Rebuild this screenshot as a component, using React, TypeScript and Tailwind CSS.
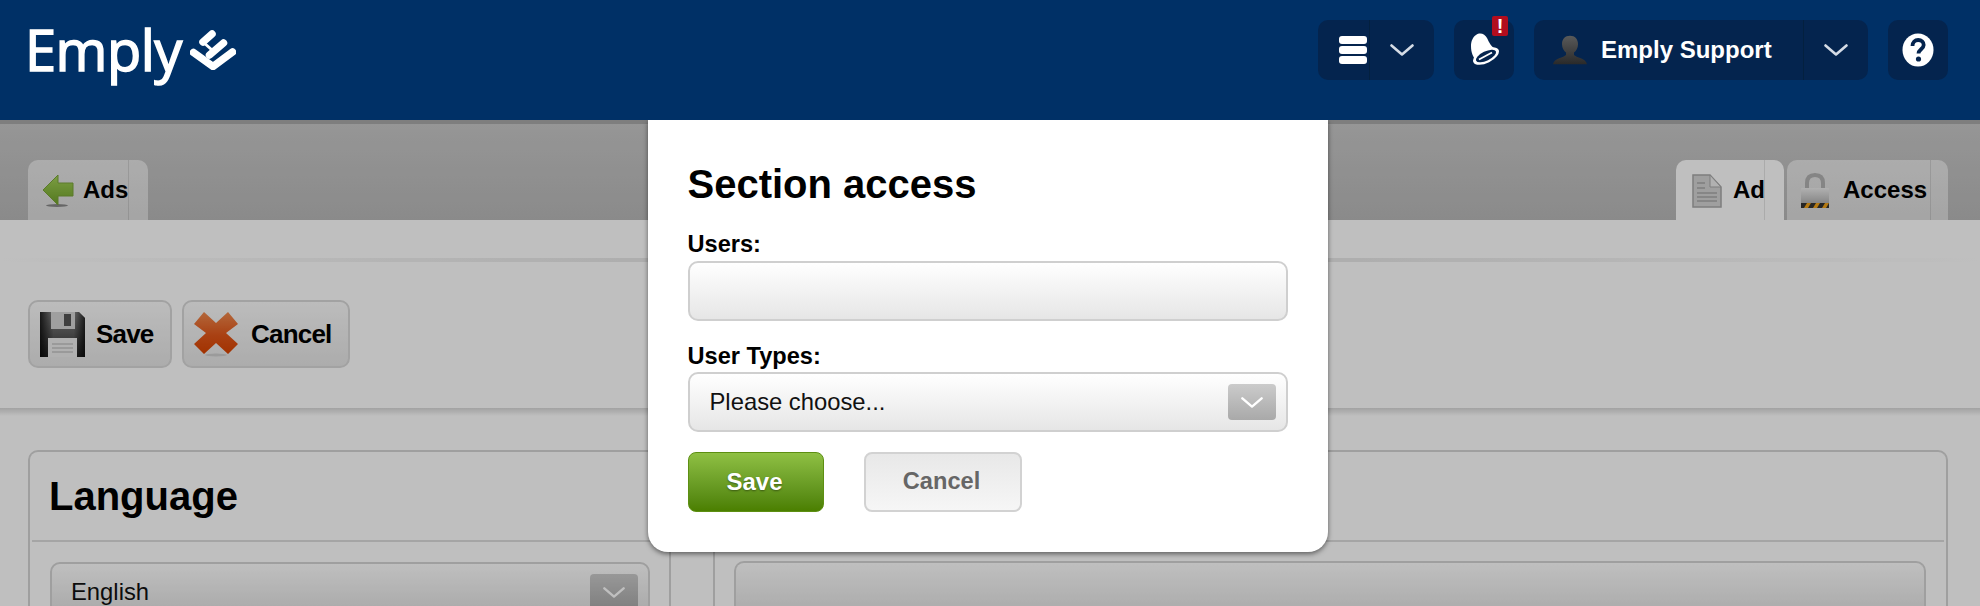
import React from "react";

const Chevron = ({ className = "" }: { className?: string }) => (
  <svg viewBox="0 0 24 12" className={className} fill="none" stroke="currentColor" strokeWidth="2.6" strokeLinecap="round" strokeLinejoin="round">
    <path d="M1.5 1.5 12 10.5 22.5 1.5" />
  </svg>
);

const Logo = () => (
  <svg viewBox="0 0 46 40" className="ml-[8px] mt-[13px] h-[40px] w-[46px]" fill="none" stroke="#fff" strokeLinecap="round" strokeLinejoin="round">
    <path d="M3.500 22.500 23 36.500 42.500 22" strokeWidth="7.500" />
    <path d="M22 4 13 12" strokeWidth="7.500" />
    <path d="M33.500 13 19.500 25" strokeWidth="7.500" />
    <path d="M13 12 22 20" strokeWidth="3" />
  </svg>
);

const Bell = () => (
  <svg viewBox="0 0 30 32" className="ml-[2px] mt-[13px] h-[32px] w-[30px]">
    <path d="M6 2c4-3 9-1 11 3 2 4 4 9 10 12L7 29C3 24 1 20 1 13 1 8 3 4 6 2Z" fill="#fff" />
    <ellipse cx="16" cy="23" rx="14" ry="7" transform="rotate(-26 16 23)" fill="#fff" />
    <ellipse cx="16" cy="23" rx="11" ry="4.600" transform="rotate(-26 16 23)" fill="#04244e" />
    <path d="M9 26.500 22 19.500" stroke="#fff" strokeWidth="1.800" />
  </svg>
);

const Person = () => (
  <svg viewBox="0 0 34 36" preserveAspectRatio="none" className="h-[30px] w-[34px]">
    <defs>
      <linearGradient id="pg" x1="0" y1="0" x2="0" y2="1">
        <stop offset="0" stopColor="#5a5a5a" />
        <stop offset="1" stopColor="#2a2a2a" />
      </linearGradient>
    </defs>
    <path d="M17 1c5 0 8 4 8 10 0 5-2 8-4 10v3c2 3 12 4 13 11H0c1-7 11-8 13-11v-3c-2-2-4-5-4-10C9 5 12 1 17 1Z" fill="url(#pg)" />
  </svg>
);

const Help = () => (
  <svg viewBox="0 0 32 34" className="h-[34px] w-[32px]">
    <ellipse cx="16" cy="17" rx="15.500" ry="16.500" fill="#fff" />
    <path d="M10.500 13c0-3.800 2.500-6 5.700-6 3.300 0 5.500 2.200 5.500 5 0 4-5.200 4.500-5.200 8.500" fill="none" stroke="#04244e" strokeWidth="3.800" />
    <circle cx="16.500" cy="26" r="2.600" fill="#04244e" />
  </svg>
);

const ArrowIcon = () => (
  <svg viewBox="0 0 32 34" className="h-[34px] w-[32px]">
    <defs>
      <linearGradient id="ag" x1="0" y1="0" x2="0" y2="1">
        <stop offset="0" stopColor="#a6d45a" />
        <stop offset="1" stopColor="#6fa02a" />
      </linearGradient>
    </defs>
    <ellipse cx="15" cy="31.500" rx="11" ry="1.500" fill="#888" />
    <path d="M16 1 1 16 16 31V22H31V9H16Z" fill="url(#ag)" stroke="#7aa33a" strokeWidth="1" />
  </svg>
);

const DocIcon = () => (
  <svg viewBox="0 0 30 34" className="h-[34px] w-[30px]">
    <path d="M1 1h17l11 12v20H1Z" fill="#d4d4d4" stroke="#a8a8a8" strokeWidth="1.500" />
    <path d="M18 1v12h11Z" fill="#ececec" stroke="#a8a8a8" strokeWidth="1" />
    <path d="M5 9h8M5 14h8M5 19h20M5 23h20M5 27h20" stroke="#a8a8a8" strokeWidth="1.500" />
  </svg>
);

const LockIcon = () => (
  <svg viewBox="0 0 30 36" className="h-[36px] w-[32px]">
    <defs>
      <linearGradient id="lg" x1="0" y1="0" x2="0" y2="1">
        <stop offset="0" stopColor="#ececec" />
        <stop offset="1" stopColor="#a0a0a0" />
      </linearGradient>
    </defs>
    <path d="M7 17V10C7 4 10 2 15 2s8 2 8 8v7" fill="none" stroke="#b2b2b2" strokeWidth="4" />
    <rect x="1" y="15" width="28" height="20" rx="1" fill="url(#lg)" />
    <rect x="1" y="30" width="28" height="5" fill="#333" />
    <path d="M4 35l3-5h4l-3 5ZM13 35l3-5h4l-3 5ZM22 35l3-5h4l-3 5Z" fill="#f0a218" />
  </svg>
);

const FloppyIcon = () => (
  <svg viewBox="0 0 47 46" className="h-[46px] w-[47px]">
    <defs>
      <linearGradient id="fg" x1="0" y1="0" x2="0" y2="1">
        <stop offset="0" stopColor="#8a8a8a" />
        <stop offset="1" stopColor="#2a2a2a" />
      </linearGradient>
      <linearGradient id="fh" x1="0" y1="0" x2="1" y2="0">
        <stop offset="0" stopColor="#000" stopOpacity=".75" />
        <stop offset=".3" stopColor="#000" stopOpacity="0" />
        <stop offset=".75" stopColor="#000" stopOpacity="0" />
        <stop offset="1" stopColor="#000" stopOpacity=".7" />
      </linearGradient>
    </defs>
    <path d="M1 1h39l6 6v39H1Z" fill="url(#fg)" />
    <path d="M1 1h39l6 6v39H1Z" fill="url(#fh)" />
    <rect x="12" y="1" width="24" height="17" fill="#d4d4d4" />
    <rect x="25" y="3" width="7" height="12" fill="#555" />
    <rect x="9" y="27" width="29" height="19" fill="#ececec" />
    <path d="M13 33h21M13 37h21M13 41h21" stroke="#c4c4c4" strokeWidth="1.500" />
  </svg>
);

const CrossIcon = () => (
  <svg viewBox="0 0 46 46" className="h-[46px] w-[46px]">
    <defs>
      <linearGradient id="xg" x1="0" y1="0" x2="0" y2="1">
        <stop offset="0" stopColor="#ef8a4f" />
        <stop offset=".55" stopColor="#e2571a" />
        <stop offset="1" stopColor="#d84300" />
      </linearGradient>
    </defs>
    <ellipse cx="23" cy="44" rx="11" ry="1.500" fill="#cfcfcf" />
    <path d="M11 1 23 12 35 1 45 13 33 22 45 33 35 43 23 32 11 43 1 33 13 22 1 13Z" fill="url(#xg)" />
  </svg>
);

const SelectBox = ({ text }: { text: string }) => (
  <div className="flex h-[60px] items-center justify-between rounded-[10px] border-2 border-[#cfcfcf] bg-gradient-to-b from-white to-[#e6e6e6] pl-[20px] pr-[10px]">
    <span className="text-[23.800px] text-[#111]">{text}</span>
    <span className="flex h-[36px] w-[48px] items-center justify-center rounded-[4px] bg-gradient-to-b from-[#cbcbcb] to-[#a9a9a9] text-white">
      <Chevron className="h-[11px] w-[22px]" />
    </span>
  </div>
);

const Tab = ({ icon, label, width, divider, active }: { icon: React.ReactNode; label: string; width: string; divider: string; active?: boolean }) => (
  <div className={`relative flex h-[60px] items-start rounded-t-[10px] ${width} ${active ? "bg-white" : "bg-gradient-to-b from-[#e6e6e6] to-[#dcdcdc]"}`}>
    {icon}
    <span className="text-[24px] font-bold leading-[60px] text-black">{label}</span>
    <span className={`absolute top-0 bottom-0 w-px bg-black/10 ${divider}`} />
  </div>
);

export default function App() {
  return (
    <div className="relative h-[606px] w-[1980px] overflow-hidden bg-white font-['Liberation_Sans',Arial,sans-serif]">
      {/* top bar */}
      <header className="relative z-30 flex h-[120px] items-start justify-between bg-[#003066] pl-[25px] pr-[32px]">
        <div className="flex items-start pt-[17px]">
          <span className="font-['Open_Sans',sans-serif] text-[56px] leading-[65px] tracking-[-0.500px] text-white [-webkit-text-stroke:1.500px_white]">Emply</span>
          <Logo />
        </div>
        <div className="flex items-center gap-[20px] pt-[20px]">
          <div className="flex h-[60px] w-[116px] items-center rounded-[10px] bg-[#04244e]">
            <div className="flex h-full w-[52px] flex-col items-end justify-center gap-[2px] border-r border-[#03203f]">
              <span className="mr-[2px] h-[8px] w-[28px] rounded-[3px] bg-white" />
              <span className="mr-[2px] h-[8px] w-[28px] rounded-[3px] bg-white" />
              <span className="mr-[2px] h-[8px] w-[28px] rounded-[3px] bg-white" />
            </div>
            <div className="flex flex-1 justify-center text-[#d5dce6]">
              <Chevron className="h-[12px] w-[24px]" />
            </div>
          </div>
          <div className="relative flex h-[60px] w-[60px] items-start justify-center rounded-[10px] bg-[#04244e]">
            <Bell />
            <span className="absolute -top-[4px] left-[38px] flex h-[20px] w-[16px] items-center justify-center rounded-[2px] bg-[#b20d1e] text-[20px] font-bold leading-none text-white">!</span>
          </div>
          <div className="flex h-[60px] w-[334px] items-center rounded-[10px] bg-[#04244e]">
            <div className="flex h-full w-[270px] items-center border-r border-[#03203f] pl-[19px]">
              <Person />
              <span className="ml-[14px] text-[24px] font-bold leading-none text-white">Emply Support</span>
            </div>
            <div className="flex flex-1 justify-center text-[#d5dce6]">
              <Chevron className="h-[12px] w-[24px]" />
            </div>
          </div>
          <div className="flex h-[60px] w-[60px] items-center justify-center rounded-[10px] bg-[#04244e]">
            <Help />
          </div>
        </div>
      </header>

      {/* page beneath the dialog */}
      <div className="flex h-[100px] items-end justify-between border-t-[4px] border-[#a8a8a8] bg-gradient-to-b from-[#c8c8c8] to-[#b9b9b9] pl-[28px] pr-[32px]">
        <Tab
          width="w-[120px]"
          divider="left-[100px]"
          icon={<span className="ml-[14px] mr-[9px] mt-[14px]"><ArrowIcon /></span>}
          label="Ads"
        />
        <div className="flex gap-[3px]">
          <Tab
            active
            width="w-[108px]"
            divider="left-[88px]"
            icon={<span className="ml-[16px] mr-[11px] mt-[14px]"><DocIcon /></span>}
            label="Ad"
          />
          <Tab
            width="w-[161px]"
            divider="left-[143px]"
            icon={<span className="ml-[12px] mr-[12px] mt-[13px]"><LockIcon /></span>}
            label="Access"
          />
        </div>
      </div>

      <div className="h-[188px] bg-white pt-[38px]">
        <div className="h-[4px] bg-gradient-to-r from-transparent via-[#dcdcdc] to-transparent" />
        <div className="mt-[38px] flex gap-[10px] pl-[28px]">
          <div className="flex h-[68px] w-[144px] items-center rounded-[10px] border-2 border-[#d8d8d8] bg-gradient-to-b from-[#fbfbfb] to-[#e6e6e6] pl-[9px]">
            <FloppyIcon />
            <span className="ml-[10px] text-[26px] font-bold tracking-[-0.800px] text-black">Save</span>
          </div>
          <div className="flex h-[68px] w-[168px] items-center rounded-[10px] border-2 border-[#d8d8d8] bg-gradient-to-b from-[#fbfbfb] to-[#e6e6e6] pl-[9px]">
            <CrossIcon />
            <span className="ml-[12px] text-[26px] font-bold tracking-[-0.800px] text-black">Cancel</span>
          </div>
        </div>
      </div>

      <div className="h-[8px] bg-gradient-to-b from-[#d8d8d8] to-white" />

      <div className="flex gap-[42px] pl-[28px] pr-[32px] pt-[34px]">
        <section className="w-[643px] shrink-0 rounded-t-[10px] border-x-2 border-t-2 border-[#d4d4d4]">
          <h2 className="mx-[2px] h-[90px] border-b-2 border-[#dcdcdc] pl-[17px] text-[40px] font-bold leading-[88px] text-black">Language</h2>
          <div className="pl-[20px] pr-[19px] pt-[20px]">
            <div className="flex h-[60px] items-center justify-between rounded-[10px] border-2 border-[#d4d4d4] bg-gradient-to-b from-white to-[#dedede] pl-[19px] pr-[10px]">
              <span className="text-[23.800px] text-[#111]">English</span>
              <span className="flex h-[36px] w-[48px] items-center justify-center rounded-[4px] bg-gradient-to-b from-[#cbcbcb] to-[#a9a9a9] text-white">
                <Chevron className="h-[11px] w-[22px]" />
              </span>
            </div>
          </div>
        </section>
        <section className="flex-1 rounded-t-[10px] border-x-2 border-t-2 border-[#d4d4d4]">
          <div className="mx-[2px] h-[90px] border-b-2 border-[#dcdcdc]" />
          <div className="pl-[19px] pr-[20px] pt-[19px]">
            <div className="h-[60px] rounded-t-[10px] border-x-2 border-t-2 border-[#d4d4d4] bg-gradient-to-b from-white to-[#e0e0e0]" />
          </div>
        </section>
      </div>

      {/* dim layer */}
      <div className="absolute inset-0 z-10 bg-black/25" />

      {/* dialog */}
      <div className="absolute left-[648px] top-[120px] z-20 h-[432px] w-[680px] rounded-b-[20px] bg-white pl-[39.500px] pr-[40px] pt-[41px] shadow-[0_2px_5px_rgba(0,0,0,0.5)]">
        <h1 className="text-[40px] font-bold leading-[46px] text-black">Section access</h1>
        <label className="mt-[23px] block text-[23.600px] font-bold leading-[28px] text-black">Users:</label>
        <div className="mt-[3px] h-[60px] rounded-[10px] border-2 border-[#cfcfcf] bg-gradient-to-b from-white to-[#e6e6e6]" />
        <label className="mt-[21px] block text-[23.600px] font-bold leading-[28px] text-black">User Types:</label>
        <div className="mt-[2px]">
          <SelectBox text="Please choose..." />
        </div>
        <div className="mt-[20px] flex gap-[40px]">
          <div className="flex h-[60px] w-[136px] items-center justify-center rounded-[8px] border border-[#5d8f12] bg-gradient-to-b from-[#8fc043] to-[#4b7f00] pr-[2px] text-[24px] font-bold text-white [text-shadow:0_1px_2px_rgba(0,0,0,0.4)]">Save</div>
          <div className="flex h-[60px] w-[158px] items-center justify-center rounded-[8px] border-2 border-[#d2d2d2] bg-gradient-to-b from-[#e8e8e8] to-[#f6f6f6] pr-[2px] text-[23.600px] font-bold text-[#666]">Cancel</div>
        </div>
      </div>
    </div>
  );
}
